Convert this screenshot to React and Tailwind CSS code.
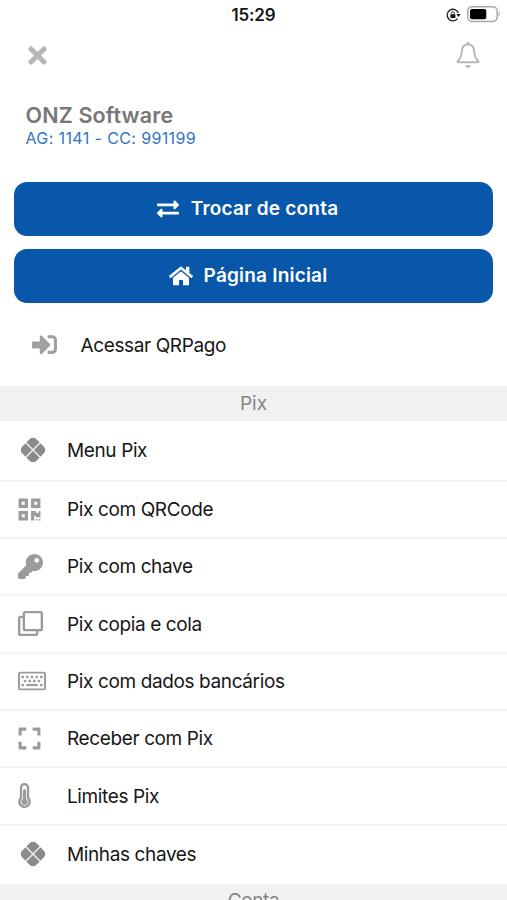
import {
  FaExchangeAlt,
  FaExpand,
  FaHome,
  FaKey,
  FaQrcode,
  FaRegClone,
  FaRegKeyboard,
  FaSignInAlt,
  FaThermometerThreeQuarters,
  FaTimes,
} from "react-icons/fa";

function PixIcon() {
  return (
    <svg className="ml-[2px]" width="26" height="26" viewBox="-13 -13 26 26">
      <g transform="rotate(45)">
        <rect x="-10" y="-10" width="20" height="20" rx="4.6" fill="#8b8b8b" />
        <path d="M-10.5 0H10.5M0-10.5V10.5" stroke="#f2f2f2" strokeWidth="1.35" />
      </g>
    </svg>
  );
}

function BellIcon() {
  return (
    <svg width="26" height="28" viewBox="0 0 26 28" fill="none" stroke="#b8b8b8" strokeWidth="2" strokeLinejoin="round">
      <path d="M13 3.2C8.8 3.6 6.9 6.7 6.8 10.5C6.6 15.5 5.5 17.3 3.4 19.2C2 20.6 2.2 21.2 3.4 21.2H22.6C23.8 21.2 24 20.6 22.6 19.2C20.5 17.3 19.4 15.5 19.2 10.5C19.1 6.7 17.2 3.6 13 3.2Z" />
      <path d="M13 1V3.2" strokeWidth="2.4" />
      <path d="M10 24.2H16C15.5 26 14.4 26.9 13 26.9S10.5 26 10 24.2Z" fill="#b8b8b8" stroke="none" />
    </svg>
  );
}

function RotationLockIcon() {
  return (
    <svg width="15" height="14" viewBox="0 0 15 14" fill="none">
      <path d="M11.6 10.6A5.8 5.8 0 1 1 12.4 5" stroke="#222" strokeWidth="1.3" />
      <path d="M10.4 6L14.6 6L12.5 9Z" fill="#111" />
      <rect x="4.4" y="6.2" width="5" height="3.9" rx=".6" fill="#111" />
      <path d="M5.4 6.6V5.3a1.5 1.5 0 0 1 3 0V6.6" stroke="#333" strokeWidth="1" />
    </svg>
  );
}

function BatteryIcon() {
  return (
    <svg width="34" height="17" viewBox="0 0 34 17">
      <rect x=".8" y=".8" width="29.4" height="14.6" rx="4.3" fill="none" stroke="#aaa" strokeWidth="1.5" />
      <rect x="3" y="3" width="16.3" height="10.2" rx="2" fill="#000" />
      <path d="M31.5 5.8C33.2 6.5 33.2 9.7 31.5 10.4Z" fill="#aaa" />
    </svg>
  );
}

const items = [
  { label: "Menu Pix", icon: <PixIcon />, height: "h-[60.5px]" },
  { label: "Pix com QRCode", icon: <FaQrcode className="-ml-[1.5px]" size={25} />, height: "h-[57.5px]" },
  { label: "Pix com chave", icon: <FaKey size={25} />, height: "h-[57px]" },
  { label: "Pix copia e cola", icon: <FaRegClone size={25} />, height: "h-[57.5px]" },
  { label: "Pix com dados bancários", icon: <FaRegKeyboard size={28} />, height: "h-[57.5px]" },
  { label: "Receber com Pix", icon: <FaExpand className="-ml-[1.5px]" size={25} />, height: "h-[57px]" },
  { label: "Limites Pix", icon: <FaThermometerThreeQuarters className="-ml-[6px]" size={25} />, height: "h-[57.5px]" },
  { label: "Minhas chaves", icon: <PixIcon />, height: "h-[58.5px] pb-[2px]" },
];

export default function App() {
  return (
    <div className="flex h-[900px] w-full flex-col overflow-hidden bg-white font-['Inter',sans-serif] text-[19px] tracking-[-0.38px] text-[#161616]">
      <div className="grid h-[30px] shrink-0 grid-cols-3 items-center">
        <span className="col-start-2 text-center text-[17px] font-semibold leading-none tracking-[-0.2px]">15:29</span>
        <div className="flex items-center justify-end gap-[6px] pb-[1px] pr-[6px]">
          <RotationLockIcon />
          <BatteryIcon />
        </div>
      </div>

      <div className="flex h-[50px] shrink-0 items-center justify-between pl-[23.5px] pr-[26px]">
        <FaTimes size={27} color="#b7b7b7" />
        <BellIcon />
      </div>

      <div className="mt-[23px] h-[78.5px] shrink-0 pl-[25.5px]">
        <h1 className="text-[21.5px] font-semibold leading-[24px] tracking-[0.15px] text-[#777]">ONZ Software</h1>
        <p className="text-[16px] leading-[22px] tracking-[0.38px] text-[#3474bf]">AG: 1141 - CC: 991199</p>
      </div>

      <div className="flex shrink-0 flex-col gap-[13.5px] px-[14px] font-semibold tracking-[0.2px] text-white">
        <button className="flex h-[54px] items-center justify-center gap-[12px] rounded-[13px] bg-[#0957ab] pr-[12px]">
          <FaExchangeAlt size={22} />
          <span className="pt-[2px]">Trocar de conta</span>
        </button>
        <button className="flex h-[54px] items-center justify-center gap-[11px] rounded-[13px] bg-[#0957ab] pr-[11px]">
          <FaHome size={24} />
          <span className="pt-[1px]">Página Inicial</span>
        </button>
      </div>

      <div className="flex h-[83px] shrink-0 items-center pl-[31.5px]">
        <FaSignInAlt size={25} color="#a0a0a0" />
        <span className="ml-[24px] pt-[3px]">Acessar QRPago</span>
      </div>

      <div className="flex h-[35px] shrink-0 items-center justify-center bg-[#f1f1f1] pt-[2px] tracking-normal text-[#858585]">Pix</div>
      <ul className="shrink-0">
        {items.map((item) => (
          <li key={item.label} className={`flex items-center border-b-2 border-[#f3f3f3] pl-[18px] text-[#9b9b9b] last:border-0 ${item.height}`}>
            <span className="flex w-[49px] items-center justify-start">{item.icon}</span>
            <span className="pt-[2px] text-[#161616]">{item.label}</span>
          </li>
        ))}
      </ul>
      <div className="flex h-[35px] shrink-0 items-center justify-center bg-[#f1f1f1] text-[#858585]">Conta</div>
    </div>
  );
}
